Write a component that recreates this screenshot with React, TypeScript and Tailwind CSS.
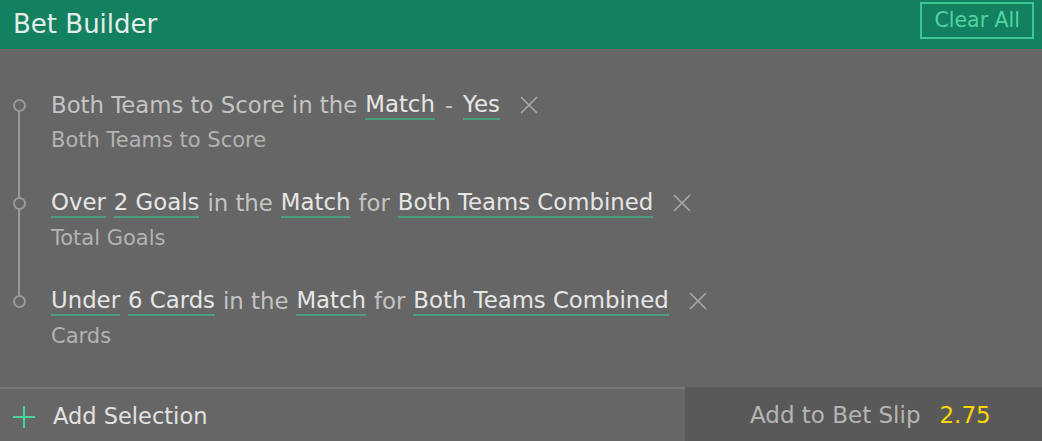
type Part = { text: string; link?: boolean; pad?: boolean };

const selections: { parts: Part[]; market: string }[] = [
  {
    parts: [
      { text: "Both Teams to Score in the" },
      { text: "Match", link: true },
      { text: "-", pad: true },
      { text: "Yes", link: true },
    ],
    market: "Both Teams to Score",
  },
  {
    parts: [
      { text: "Over", link: true },
      { text: "2 Goals", link: true },
      { text: "in the" },
      { text: "Match", link: true },
      { text: "for" },
      { text: "Both Teams Combined", link: true },
    ],
    market: "Total Goals",
  },
  {
    parts: [
      { text: "Under", link: true },
      { text: "6 Cards", link: true },
      { text: "in the" },
      { text: "Match", link: true },
      { text: "for" },
      { text: "Both Teams Combined", link: true },
    ],
    market: "Cards",
  },
];

function CloseIcon() {
  return (
    <svg width="18" height="18" viewBox="0 0 18 18" className="ml-[12px] shrink-0">
      <path d="M1 1L17 17M17 1L1 17" stroke="#a8a8a8" strokeWidth="1.6" />
    </svg>
  );
}

function PlusIcon() {
  return (
    <svg width="22" height="22" viewBox="0 0 22 22" className="shrink-0">
      <path d="M11 0V22M0 11H22" stroke="#45d39e" strokeWidth="2" />
    </svg>
  );
}

function SelectionRow({ parts, market, last }: { parts: Part[]; market: string; last: boolean }) {
  return (
    <div className="flex h-[98px]">
      <div className="relative w-[51px] shrink-0">
        {!last && <div className="absolute left-[18px] top-[21px] h-[98px] w-[2px] bg-[#9a9a9a]" />}
        <div className="absolute left-[13px] top-[15px] h-[13px] w-[13px] rounded-full border-2 border-[#9a9a9a] bg-[#666666]" />
      </div>
      <div className="flex flex-col">
        <div className="flex h-[42px] items-center gap-[8px] text-[22.8px]">
          {parts.map((p, i) =>
            p.link ? (
              <span key={i} className="border-b-2 border-[#4c9e7e] leading-[27px] text-[#e6e6e6]">
                {p.text}
              </span>
            ) : (
              <span key={i} className={p.pad ? "px-[2px] leading-[27px] text-[#c4c4c4]" : "leading-[27px] text-[#c4c4c4]"}>
                {p.text}
              </span>
            )
          )}
          <CloseIcon />
        </div>
        <div className="text-[21px] leading-[28px] text-[#b3b3b3]">{market}</div>
      </div>
    </div>
  );
}

export default function App() {
  return (
    <div className="flex h-[441px] w-[1042px] flex-col bg-[#666666]" style={{ fontFamily: '"DejaVu Sans", sans-serif' }}>
      <div className="flex h-[49px] shrink-0 items-center justify-between bg-[#138060] pl-[13px] pr-[8px]">
        <h1 className="text-[26px] text-[#e4eee9]">Bet Builder</h1>
        <button className="mb-[8px] h-[37px] border-2 border-[#3ec794] px-[12px] text-[20.5px] text-[#50d4a2]">Clear All</button>
      </div>
      <div className="flex-1 pt-[35px]">
        {selections.map((s, i) => (
          <SelectionRow key={i} parts={s.parts} market={s.market} last={i === selections.length - 1} />
        ))}
      </div>
      <div className="flex h-[54px] shrink-0">
        <div className="flex flex-1 items-center gap-[18px] border-t-2 border-[#777777] pl-[13px] pt-[3px] text-[22.5px] text-[#e2e2e2]">
          <PlusIcon />
          Add Selection
        </div>
        <div className="flex w-[357px] items-center gap-[19px] bg-[#595959] pl-[65px] pt-[3px] text-[23px]">
          <span className="text-[#b5b5b5]">Add to Bet Slip</span>
          <span className="text-[#ffd700]">2.75</span>
        </div>
      </div>
    </div>
  );
}
